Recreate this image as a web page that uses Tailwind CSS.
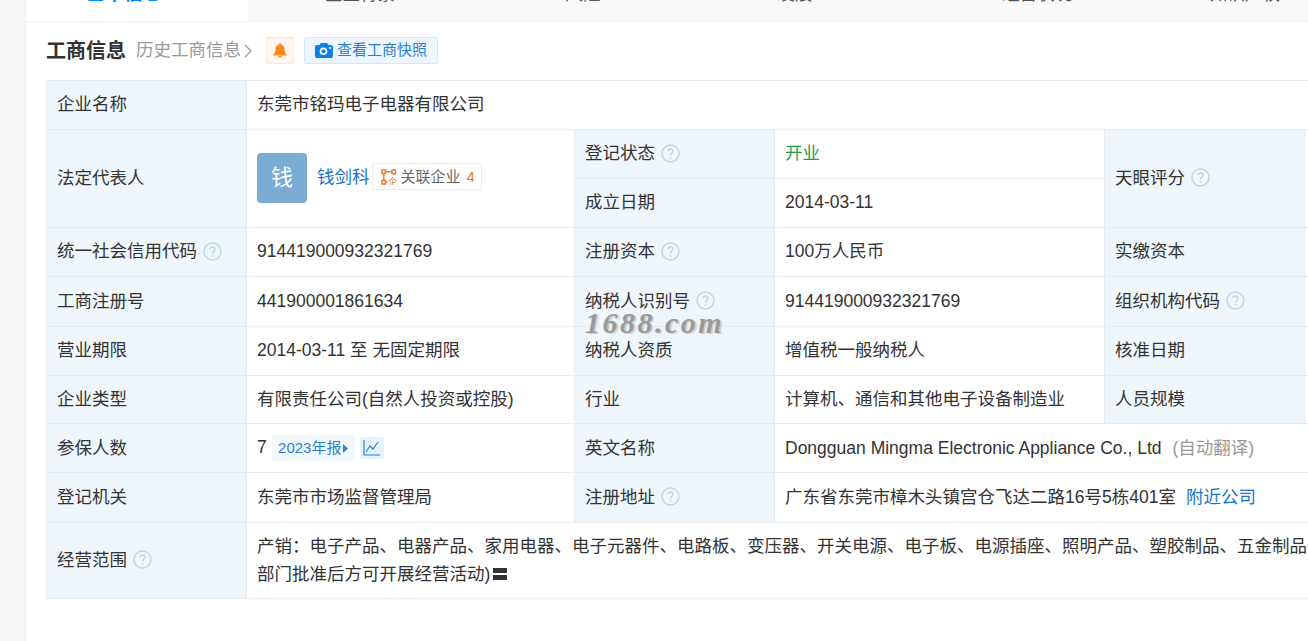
<!DOCTYPE html>
<html lang="en">
  <head>
    <meta charset="UTF-8" />
    <title>工商信息</title>
    <script src="https://cdn.jsdelivr.net/npm/@tailwindcss/browser@4"></script>
  </head>
  <body class="h-[641px] overflow-hidden bg-white font-['Liberation_Sans','Noto_Sans_CJK_SC',sans-serif] text-[17.5px] text-[#333]">
    <div class="flex h-[641px]">
      <!-- Page gutter -->
      <div class="w-[26px] shrink-0 border-r border-[#eeeeee] bg-[#f6f6f6]"></div>

      <div class="relative w-[1400px] shrink-0">
        <!-- Tabs, scrolled past the top of the window -->
        <div class="flex h-[22px] items-end overflow-hidden border-b border-[#f0f0f0] bg-[#f9f9f9] text-[#555]">
          <div class="flex h-[22px] w-[222px] shrink-0 items-end justify-center bg-white pb-[18px] pr-[26px] text-[19px] leading-none font-bold text-[#0084ff]">基本信息</div>
          <div class="flex h-[22px] w-[224px] shrink-0 items-end justify-center pb-[18px] leading-none">企业背景</div>
          <div class="flex h-[22px] w-[222px] shrink-0 items-end justify-center pb-[18px] leading-none">风险</div>
          <div class="flex h-[22px] w-[202px] shrink-0 items-end justify-center pb-[18px] leading-none">发展</div>
          <div class="flex h-[22px] w-[282px] shrink-0 items-end justify-center pb-[18px] leading-none">经营状况</div>
          <div class="flex h-[22px] w-[134px] shrink-0 items-end justify-center pb-[18px] leading-none">知识产权</div>
        </div>

        <!-- Section heading -->
        <div class="ml-[20px] flex h-[58px] items-center pb-[1px]">
          <h2 class="text-[20px] font-bold text-[#333]">工商信息</h2>
          <span class="ml-[10px] text-[17.5px] text-[#999]">历史工商信息</span>
          <svg class="ml-[3px] h-[14px] w-[9px]" viewBox="0 0 9 14" fill="none" stroke="#999" stroke-width="1.2"><path d="M1 1l6 6-6 6" /></svg>
          <span class="ml-[13px] flex h-[27px] w-[28px] items-center justify-center rounded-[2px] border border-[#fbeadb] bg-[#fff6ee]">
            <svg class="h-[15px] w-[14px]" viewBox="0 0 14 15" fill="#ff8a1f"><path d="M7 0a1 1 0 0 1 1 1v.6c2.4.5 3.6 2.4 3.6 4.8 0 2.600.6 3.800 2 5.100v.9H.4v-.9c1.400-1.300 2-2.500 2-5.100C2.400 4 3.600 2.100 6 1.600V1a1 1 0 0 1 1-1zM5.200 13h3.600a1.800 1.800 0 0 1-3.600 0z" /></svg>
          </span>
          <span class="ml-[10px] flex h-[27px] w-[134px] items-center rounded-[2px] border border-[#d5e8fa] bg-[#edf6fe] pl-[10px] text-[15px] text-[#2b7fd0]">
            <svg class="mr-[4px] h-[15px] w-[18px]" viewBox="0 0 18 15"><path fill="#0e7fe8" d="M6 0h6l1.500 2H16a2 2 0 0 1 2 2v9a2 2 0 0 1-2 2H2a2 2 0 0 1-2-2V4a2 2 0 0 1 2-2h2.500z" /><circle cx="8.500" cy="8.300" r="3.800" fill="#fff" /><circle cx="8.500" cy="8.300" r="2" fill="#0e7fe8" /><circle cx="15" cy="5" r="1" fill="#fff" /></svg>
            查看工商快照
          </span>
        </div>

        <!-- Registration table -->
        <table class="ml-[20px] table-fixed border-collapse leading-[28px] [&_td]:pb-[2px]">
          <colgroup>
            <col class="w-[200px]" />
            <col class="w-[328px]" />
            <col class="w-[200px]" />
            <col class="w-[330px]" />
            <col class="w-[200px]" />
            <col class="w-[120px]" />
          </colgroup>
          <tbody>
            <tr class="h-[49px]">
              <td class="border border-[#e9ecef] bg-[#eff6fc] pl-[10px] align-middle">企业名称</td>
              <td colspan="5" class="border border-[#e9ecef] pl-[10px] align-middle">东莞市铭玛电子电器有限公司</td>
            </tr>
            <tr class="h-[49px]">
              <td rowspan="2" class="border border-[#e9ecef] bg-[#eff6fc] pl-[10px] align-middle">法定代表人</td>
              <td rowspan="2" class="border border-[#e9ecef] pl-[10px] align-middle">
                <div class="flex items-center">
                  <span class="flex h-[50px] w-[50px] items-center justify-center rounded-[4px] bg-[#7bacd3] text-[22px] text-white">钱</span>
                  <span class="mb-[2px] ml-[10px] text-[#1a73c9]">钱剑科</span>
                  <span class="mb-[2px] ml-[2px] flex h-[27px] w-[110px] items-center rounded-[2px] border border-[#ececec] pl-[8px] text-[15px] text-[#666]">
                    <svg class="mr-[4px] h-[16px] w-[16px]" viewBox="0 0 16 16" fill="none" stroke="#e8762c" stroke-width="1.400"><rect x="1" y="1" width="3.500" height="3.500" /><rect x="11" y="1" width="3.500" height="3.500" /><rect x="1" y="11.500" width="3.500" height="3.500" /><path d="M4.500 2.800h6.500M2.800 4.500v7M12.800 4.500v1.500M4.500 13.200h2" /><text x="7" y="15.500" font-size="9" fill="#e8762c" stroke="none">企</text></svg>
                    关联企业<span class="ml-[6px] text-[#e8762c]">4</span>
                  </span>
                </div>
              </td>
              <td class="border border-[#e9ecef] bg-[#eff6fc] pl-[10px] align-middle">
                <span class="flex items-center">登记状态<svg class="ml-[6px] h-[19px] w-[19px]" viewBox="0 0 19 19" fill="none" stroke="#c0d6e8" stroke-width="1.500"><circle cx="9.500" cy="9.500" r="8.500" /><path d="M7 7.300c0-3.200 5-3.200 5 0 0 2-2.500 2-2.500 4.300M9.500 13.200v1.500" /></svg></span>
              </td>
              <td class="border border-[#e9ecef] pl-[10px] align-middle text-[#1f9d55]">开业</td>
              <td rowspan="2" class="border border-[#e9ecef] bg-[#eff6fc] pl-[10px] align-middle">
                <span class="flex items-center">天眼评分<svg class="ml-[6px] h-[19px] w-[19px]" viewBox="0 0 19 19" fill="none" stroke="#c0d6e8" stroke-width="1.500"><circle cx="9.500" cy="9.500" r="8.500" /><path d="M7 7.300c0-3.200 5-3.200 5 0 0 2-2.500 2-2.500 4.300M9.500 13.200v1.500" /></svg></span>
              </td>
              <td rowspan="2" class="border border-[#e9ecef]"></td>
            </tr>
            <tr class="h-[49px]">
              <td class="border border-[#e9ecef] bg-[#eff6fc] pl-[10px] align-middle">成立日期</td>
              <td class="border border-[#e9ecef] pl-[10px] align-middle">2014-03-11</td>
            </tr>
            <tr class="h-[49px]">
              <td class="border border-[#e9ecef] bg-[#eff6fc] pl-[10px] align-middle">
                <span class="flex items-center">统一社会信用代码<svg class="ml-[6px] h-[19px] w-[19px]" viewBox="0 0 19 19" fill="none" stroke="#c0d6e8" stroke-width="1.500"><circle cx="9.500" cy="9.500" r="8.500" /><path d="M7 7.300c0-3.200 5-3.200 5 0 0 2-2.500 2-2.500 4.300M9.500 13.200v1.500" /></svg></span>
              </td>
              <td class="border border-[#e9ecef] pl-[10px] align-middle">914419000932321769</td>
              <td class="border border-[#e9ecef] bg-[#eff6fc] pl-[10px] align-middle">
                <span class="flex items-center">注册资本<svg class="ml-[6px] h-[19px] w-[19px]" viewBox="0 0 19 19" fill="none" stroke="#c0d6e8" stroke-width="1.500"><circle cx="9.500" cy="9.500" r="8.500" /><path d="M7 7.300c0-3.200 5-3.200 5 0 0 2-2.500 2-2.500 4.300M9.500 13.200v1.500" /></svg></span>
              </td>
              <td class="border border-[#e9ecef] pl-[10px] align-middle">100万人民币</td>
              <td class="border border-[#e9ecef] bg-[#eff6fc] pl-[10px] align-middle">实缴资本</td>
              <td class="border border-[#e9ecef]"></td>
            </tr>
            <tr class="h-[50px]">
              <td class="border border-[#e9ecef] bg-[#eff6fc] pl-[10px] align-middle">工商注册号</td>
              <td class="border border-[#e9ecef] pl-[10px] align-middle">441900001861634</td>
              <td class="border border-[#e9ecef] bg-[#eff6fc] pl-[10px] align-middle">
                <span class="flex items-center">纳税人识别号<svg class="ml-[6px] h-[19px] w-[19px]" viewBox="0 0 19 19" fill="none" stroke="#c0d6e8" stroke-width="1.500"><circle cx="9.500" cy="9.500" r="8.500" /><path d="M7 7.300c0-3.200 5-3.200 5 0 0 2-2.500 2-2.500 4.300M9.500 13.200v1.500" /></svg></span>
              </td>
              <td class="border border-[#e9ecef] pl-[10px] align-middle">914419000932321769</td>
              <td class="border border-[#e9ecef] bg-[#eff6fc] pl-[10px] align-middle">
                <span class="flex items-center">组织机构代码<svg class="ml-[6px] h-[19px] w-[19px]" viewBox="0 0 19 19" fill="none" stroke="#c0d6e8" stroke-width="1.500"><circle cx="9.500" cy="9.500" r="8.500" /><path d="M7 7.300c0-3.200 5-3.200 5 0 0 2-2.500 2-2.500 4.300M9.500 13.200v1.500" /></svg></span>
              </td>
              <td class="border border-[#e9ecef]"></td>
            </tr>
            <tr class="h-[49px]">
              <td class="border border-[#e9ecef] bg-[#eff6fc] pl-[10px] align-middle">营业期限</td>
              <td class="border border-[#e9ecef] pl-[10px] align-middle">2014-03-11 至 无固定期限</td>
              <td class="border border-[#e9ecef] bg-[#eff6fc] pl-[10px] align-middle">纳税人资质</td>
              <td class="border border-[#e9ecef] pl-[10px] align-middle">增值税一般纳税人</td>
              <td class="border border-[#e9ecef] bg-[#eff6fc] pl-[10px] align-middle">核准日期</td>
              <td class="border border-[#e9ecef]"></td>
            </tr>
            <tr class="h-[48px]">
              <td class="border border-[#e9ecef] bg-[#eff6fc] pl-[10px] align-middle">企业类型</td>
              <td class="border border-[#e9ecef] pl-[10px] align-middle">有限责任公司(自然人投资或控股)</td>
              <td class="border border-[#e9ecef] bg-[#eff6fc] pl-[10px] align-middle">行业</td>
              <td class="border border-[#e9ecef] pl-[10px] align-middle">计算机、通信和其他电子设备制造业</td>
              <td class="border border-[#e9ecef] bg-[#eff6fc] pl-[10px] align-middle">人员规模</td>
              <td class="border border-[#e9ecef]"></td>
            </tr>
            <tr class="h-[49px] [&>td]:pt-[2px]">
              <td class="border border-[#e9ecef] bg-[#eff6fc] pl-[10px] align-middle">参保人数</td>
              <td class="border border-[#e9ecef] pl-[10px] align-middle">
                <div class="flex items-center">
                  <span class="mb-[2px]">7</span>
                  <span class="ml-[5px] flex h-[26px] w-[83px] items-center justify-center rounded-[2px] bg-[#f1f8fe] text-[15px] text-[#2b7fd0]">2023年报<svg class="ml-[2px] h-[9px] w-[5px]" viewBox="0 0 5 9" fill="#2b7fd0"><path d="M0 0l5 4.500-5 4.500z" /></svg></span>
                  <span class="ml-[5px] flex h-[22px] w-[24px] items-center justify-center rounded-[2px] bg-[#e6f2fb]">
                    <svg class="h-[16px] w-[17px]" viewBox="0 0 17 16" fill="none" stroke="#2b7fd0" stroke-width="1.200"><path d="M1 0v15h16M3 12l4-6 3 3 5-7" /></svg>
                  </span>
                </div>
              </td>
              <td class="border border-[#e9ecef] bg-[#eff6fc] pl-[10px] align-middle">英文名称</td>
              <td colspan="3" class="border border-[#e9ecef] pl-[10px] align-middle">Dongguan Mingma Electronic Appliance Co., Ltd<span class="ml-[11px] text-[#999]">(自动翻译)</span></td>
            </tr>
            <tr class="h-[50px]">
              <td class="border border-[#e9ecef] bg-[#eff6fc] pl-[10px] align-middle">登记机关</td>
              <td class="border border-[#e9ecef] pl-[10px] align-middle">东莞市市场监督管理局</td>
              <td class="border border-[#e9ecef] bg-[#eff6fc] pl-[10px] align-middle">
                <span class="flex items-center">注册地址<svg class="ml-[6px] h-[19px] w-[19px]" viewBox="0 0 19 19" fill="none" stroke="#c0d6e8" stroke-width="1.500"><circle cx="9.500" cy="9.500" r="8.500" /><path d="M7 7.300c0-3.200 5-3.200 5 0 0 2-2.500 2-2.500 4.300M9.500 13.200v1.500" /></svg></span>
              </td>
              <td colspan="3" class="border border-[#e9ecef] pl-[10px] align-middle">广东省东莞市樟木头镇宫仓飞达二路16号5栋401室<span class="ml-[10px] text-[#1a73c9]">附近公司</span></td>
            </tr>
            <tr class="h-[76px]">
              <td class="border border-[#e9ecef] bg-[#eff6fc] pl-[10px] align-middle">
                <span class="flex items-center">经营范围<svg class="ml-[6px] h-[19px] w-[19px]" viewBox="0 0 19 19" fill="none" stroke="#c0d6e8" stroke-width="1.500"><circle cx="9.500" cy="9.500" r="8.500" /><path d="M7 7.300c0-3.200 5-3.200 5 0 0 2-2.500 2-2.500 4.300M9.500 13.200v1.500" /></svg></span>
              </td>
              <td colspan="5" class="border border-[#e9ecef] pl-[10px] align-middle">
                产销：电子产品、电器产品、家用电器、电子元器件、电路板、变压器、开关电源、电子板、电源插座、照明产品、塑胶制品、五金制品<br />
                <span class="inline-flex items-center">部门批准后方可开展经营活动)<span class="ml-[3px] flex h-[12px] w-[14px] flex-col justify-between"><span class="h-[5px] bg-[#333]"></span><span class="h-[5px] bg-[#333]"></span></span></span>
              </td>
            </tr>
          </tbody>
        </table>

        <!-- Site watermark stamped over the table -->
        <div class="absolute left-[559px] top-[308px] font-['Liberation_Serif',serif] text-[30px] leading-none font-bold tracking-[2.5px] text-[#9a9a9a] italic [text-shadow:2px_1px_1px_#cfcfcf]">1688.com</div>
      </div>
    </div>
  </body>
</html>
